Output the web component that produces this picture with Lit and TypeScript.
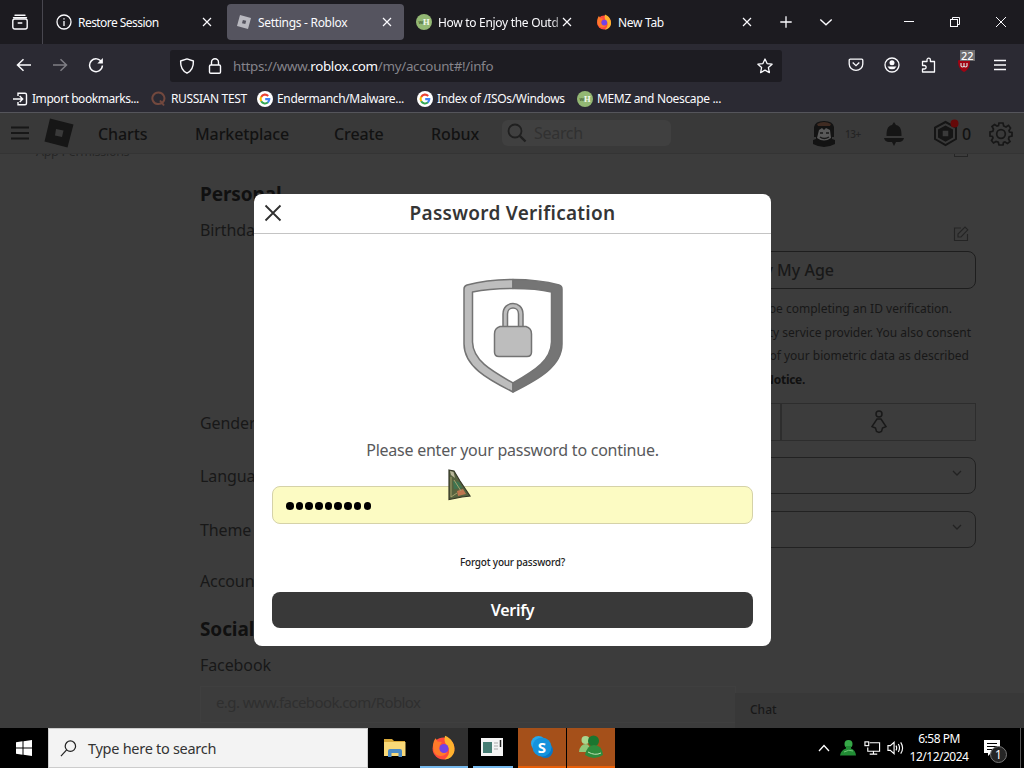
import { css, html, LitElement, svg } from "lit";
import { customElement, property } from "lit/decorators.js";
import { classMap } from "lit/directives/class-map.js";

const robloxLogo = svg`
  <path fill="#b9b9c0" d="M4 1 L15 4 L12 15 L1 12 Z" />
  <path fill="#55545f" d="M6.9 5.9 L10.2 6.8 L9.3 10.1 L6 9.2 Z" />
`;

const firefox = svg`
  <circle cx="8" cy="8.6" r="7" fill="#ff4a3d" />
  <path fill="#ffb22e" d="M9 0.5 C13 2 15.5 6 15 10 C14.6 13 12 15.6 8.5 15.6 C12 13.5 12.6 9 10 6.4 C8.5 5 8.4 2.5 9 0.5 Z" />
  <path fill="#ff7a2a" d="M1.3 7 C1.3 4.5 2.2 3 3 2 L4.2 4.2 L7 4.5 L5.5 7 C5 10 7 12 10.5 11 C9 14 3.5 14.5 1.8 10.5 Z" />
  <circle cx="8.3" cy="8.6" r="2.9" fill="#7542e5" />
`;

const google = svg`
  <circle cx="8" cy="8" r="8" fill="#fff" />
  <g fill="none" stroke-width="2.1">
    <path stroke="#ea4335" d="M4.2 5.9 A4.4 4.4 0 0 1 11.2 4.9" />
    <path stroke="#fbbc05" d="M4.3 10.4 A4.4 4.4 0 0 1 4.2 5.8" />
    <path stroke="#34a853" d="M11 11.3 A4.4 4.4 0 0 1 4.2 10.3" />
    <path stroke="#4285f4" d="M8.2 8.1 H12.3 A4.4 4.4 0 0 1 10.9 11.4" />
  </g>
`;

const wikihow = svg`
  <circle cx="8" cy="8" r="8" fill="#93b874" />
  <text x="2.5" y="10" font-size="6" font-weight="bold" fill="#4d6b3c" font-family="Liberation Sans">w</text>
  <text x="7" y="11" font-size="8.5" font-weight="bold" fill="#f2f7ec" font-family="Liberation Serif">H</text>
`;

const icons: Record<string, unknown> = {
  roblox: robloxLogo,
  firefox,
  google,
  wikihow,
  view: svg`<g fill="none" stroke="currentColor" stroke-width="1.4" stroke-linecap="round"><path d="M3 1.2 H13 M1.5 3.8 H14.5" /><rect x="0.8" y="5" width="14.4" height="10" rx="2" /><path d="M6.2 9 H9.8" /></g>`,
  info: svg`<g fill="none" stroke="currentColor" stroke-width="1.3"><circle cx="8" cy="8" r="7" /><path d="M8 7 V12" /><path d="M8 4.2 V5.6" /></g>`,
  close: svg`<path d="M4 4 L12 12 M12 4 L4 12" stroke="currentColor" stroke-width="1.2" />`,
  plus: svg`<path d="M8 2.3 V13.7 M2.3 8 H13.7" stroke="currentColor" stroke-width="1.3" />`,
  chevron: svg`<path d="M2.3 5.4 L8 10.8 L13.7 5.4" fill="none" stroke="currentColor" stroke-width="1.4" />`,
  minimize: svg`<path d="M3 7.5 H13" stroke="currentColor" />`,
  restore: svg`<g fill="none" stroke="currentColor"><rect x="3.5" y="5.5" width="7" height="7" /><path d="M5.5 5.5 V3.5 H12.5 V10.5 H10.5" /></g>`,
  windowClose: svg`<path d="M3 3 L13 13 M13 3 L3 13" stroke="currentColor" />`,
  back: svg`<path d="M15 8 H1.5 M7.5 2.2 L1.5 8 L7.5 13.8" fill="none" stroke="currentColor" stroke-width="1.5" />`,
  forward: svg`<path d="M1 8 H14.5 M8.5 2.2 L14.5 8 L8.5 13.8" fill="none" stroke="currentColor" stroke-width="1.5" />`,
  reload: svg`<path d="M13.7 5.3 A6.4 6.4 0 1 0 14.4 8.5" fill="none" stroke="currentColor" stroke-width="1.5" /><path d="M14.9 0.9 V6.5 H9.3 Z" fill="currentColor" />`,
  shield: svg`<path d="M8 0.9 L14.4 3 C14.6 9 12.5 13 8 15.2 C3.5 13 1.4 9 1.6 3 Z" fill="none" stroke="currentColor" stroke-width="1.4" stroke-linejoin="round" />`,
  lock: svg`<g fill="none" stroke="currentColor" stroke-width="1.4"><rect x="2.5" y="7" width="11" height="8.3" rx="1.3" /><path d="M4.5 7 V4.3 A3.5 3.5 0 0 1 11.5 4.3 V7" /></g>`,
  star: svg`<path d="M8 1 L10.1 5.6 L15.1 6.2 L11.4 9.6 L12.4 14.6 L8 12.1 L3.6 14.6 L4.6 9.6 L0.9 6.2 L5.9 5.6 Z" fill="none" stroke="currentColor" stroke-width="1.3" stroke-linejoin="round" />`,
  pocket: svg`<g fill="none" stroke="currentColor" stroke-width="1.3"><path d="M2.2 2.2 H13.8 A1 1 0 0 1 14.8 3.2 V7 A6.8 6.3 0 0 1 1.2 7 V3.2 A1 1 0 0 1 2.2 2.2 Z" /><path d="M4.7 5.5 L8 8.7 L11.3 5.5" /></g>`,
  account: svg`<circle cx="8" cy="8" r="7" fill="none" stroke="currentColor" stroke-width="1.3" /><circle cx="8" cy="5.8" r="2.5" fill="currentColor" /><path d="M3.5 9.5 H12.5 A5 5 0 0 1 3.5 9.5 Z" fill="currentColor" />`,
  puzzle: svg`<path d="M2.5 7 V4.5 H7 V2.8 A1.7 1.7 0 0 1 10.4 2.8 V4.5 H14.5 V15 H2.5 V12 H4.4 A1.7 1.7 0 0 0 4.4 8.5 H2.5 Z" fill="none" stroke="currentColor" stroke-width="1.3" stroke-linejoin="round" />`,
  menu: svg`<path d="M2 3.5 H14 M2 8 H14 M2 12.5 H14" stroke="currentColor" stroke-width="1.4" />`,
  importIcon: svg`<g fill="none" stroke="currentColor" stroke-width="1.4"><path d="M5 5 V2.2 H12 Q13.5 2.2 13.5 3.7 V12.3 Q13.5 13.8 12 13.8 H5 V11" /><path d="M0 8 H9.5 M6.7 5 L9.7 8 L6.7 11" /></g>`,
  quora: svg`<g fill="none" stroke="#72483e" stroke-width="2"><path d="M7.500 1.500 A6 5.800 0 1 0 12 11 A6 5.800 0 0 0 7.500 1.500" /><path d="M9 9.500 L13 14.500" /></g>`,
  ublock: svg`<path d="M8 1.5 L14 3.5 C14 9.5 12 13 8 15 C4 13 2 9.5 2 3.5 Z" fill="#a00312" /><path d="M5 6 V9 Q6.5 11 8 9 Q9.5 11 11 9 V6 M8 6 V9" fill="none" stroke="#ddd" stroke-width="1.2" />`,
};

@customElement("ui-icon")
export class UiIconElement extends LitElement {
  @property()
  name: string = "";

  render() {
    return html`<svg viewBox="0 0 16 16">${icons[this.name]}</svg>`;
  }

  static styles = css`
    :host {
      display: block;
      flex: none;
      width: 16px;
      height: 16px;
    }
    svg {
      display: block;
      width: 100%;
      height: 100%;
    }
  `;
}

@customElement("browser-chrome")
export class BrowserChromeElement extends LitElement {
  tabs = [
    { icon: "info", title: "Restore Session", active: false },
    { icon: "roblox", title: "Settings - Roblox", active: true },
    { icon: "wikihow", title: "How to Enjoy the Outd", active: false },
    { icon: "firefox", title: "New Tab", active: false },
  ];

  bookmarks = [
    { icon: "importIcon", title: "Import bookmarks...", width: 138 },
    { icon: "quora", title: "RUSSIAN TEST", width: 106 },
    { icon: "google", title: "Endermanch/Malware...", width: 160 },
    { icon: "google", title: "Index of /ISOs/Windows", width: 160 },
    { icon: "wikihow", title: "MEMZ and Noescape ...", width: 160 },
  ];

  render() {
    return html`
      <div class="tabs">
        <div class="view"><ui-icon name="view"></ui-icon></div>
        ${this.tabs.map(
          (t) => html`
            <div class=${classMap({ tab: true, active: t.active })}>
              <ui-icon name=${t.icon}></ui-icon>
              <span class="title">${t.title}</span>
              <ui-icon name="close"></ui-icon>
            </div>
          `
        )}
        <ui-icon class="plus" name="plus"></ui-icon>
        <ui-icon class="all" name="chevron"></ui-icon>
        <div class="window">
          <ui-icon name="minimize"></ui-icon>
          <ui-icon name="restore"></ui-icon>
          <ui-icon name="windowClose"></ui-icon>
        </div>
      </div>
      <div class="nav">
        <div class="moves">
          <ui-icon name="back"></ui-icon>
          <ui-icon class="dim" name="forward"></ui-icon>
          <ui-icon name="reload"></ui-icon>
        </div>
        <div class="url">
          <ui-icon name="shield"></ui-icon>
          <ui-icon name="lock"></ui-icon>
          <span class="address">https://www.<b>roblox.com</b>/my/account#!/info</span>
          <ui-icon name="star"></ui-icon>
        </div>
        <div class="tools">
          <ui-icon name="pocket"></ui-icon>
          <ui-icon name="account"></ui-icon>
          <ui-icon name="puzzle"></ui-icon>
          <div class="blocker">
            <ui-icon name="ublock"></ui-icon>
            <span class="count">22</span>
          </div>
          <ui-icon name="menu"></ui-icon>
        </div>
      </div>
      <div class="bookmarks">
        ${this.bookmarks.map(
          (b) => html`
            <div class="bookmark" style="width: ${b.width}px">
              <ui-icon name=${b.icon}></ui-icon>${b.title}
            </div>
          `
        )}
      </div>
    `;
  }

  static styles = css`
    :host {
      display: block;
      height: 113px;
      box-sizing: border-box;
      background: #2b2a33;
      border-bottom: 1px solid #55555b;
      color: #fbfbfe;
      font: 12px "Noto Sans", sans-serif;
      white-space: nowrap;
    }
    .tabs {
      display: flex;
      align-items: center;
      height: 44px;
      background: #1c1b20;
    }
    .view {
      display: flex;
      align-items: center;
      justify-content: center;
      width: 43px;
      height: 44px;
      padding-right: 2px;
      box-sizing: border-box;
      border-right: 1px solid #48474f;
      margin-right: 4px;
    }
    .tab {
      display: flex;
      align-items: center;
      box-sizing: border-box;
      width: 177px;
      height: 36px;
      margin-right: 3px;
      padding: 0 9px 0 9px;
      border-radius: 4px;
    }
    .active {
      background: #55545f;
    }
    .title {
      flex: 1;
      min-width: 0;
      margin-left: 6px;
      letter-spacing: -0.3px;
    }
    .tab:nth-child(2) .title {
      letter-spacing: -0.55px;
    }
    .tab:nth-child(4) .title {
      margin-right: -4px;
      mask-image: linear-gradient(to right, #000 90%, #0004);
    }
    .plus {
      margin-left: 11px;
    }
    .all {
      margin-left: 24px;
    }
    .window {
      display: flex;
      gap: 30px;
      margin-left: auto;
      padding-right: 15px;
    }
    .nav {
      display: flex;
      align-items: center;
      height: 42px;
    }
    .moves {
      display: flex;
      gap: 20px;
      width: 154px;
      padding-left: 16px;
    }
    .dim {
      opacity: 0.4;
    }
    .url {
      display: flex;
      align-items: center;
      box-sizing: border-box;
      width: 612px;
      height: 32px;
      margin-top: 1px;
      padding: 0 9px;
      gap: 12px;
      border-radius: 3px;
      background: #1d1c22;
    }
    .address {
      flex: 1;
      font-size: 13.4px;
      letter-spacing: -0.3px;
      margin-left: -2px;
      color: #85848b;
    }
    b {
      font-weight: 400;
      color: #fbfbfe;
    }
    .tools {
      display: flex;
      gap: 20px;
      margin-left: auto;
      padding-right: 16px;
    }
    .blocker {
      position: relative;
    }
    .count {
      position: absolute;
      left: 4px;
      top: -7px;
      padding: 0 1px;
      background: #6d6d70;
      font: 500 11px/11px "Noto Sans", sans-serif;
    }
    .bookmarks {
      display: flex;
      align-items: center;
      height: 25px;
      padding-left: 13px;
    }
    .bookmark {
      display: flex;
      align-items: center;
      gap: 4px;
      font-size: 12px;
      letter-spacing: -0.35px;
    }
    .bookmark:first-child {
      gap: 3px;
      letter-spacing: -0.45px;
    }
  `;
}

@customElement("settings-page")
export class SettingsPageElement extends LitElement {
  // "end" is the gap between the text and the right side of the column
  notice = [
    { text: "be completing an ID verification.", end: 24 },
    { text: "ty service provider. You also consent", end: 5 },
    { text: "of your biometric data as described", end: 7 },
  ];

  render() {
    return html`
      <header class="header">
        <svg class="burger" viewBox="0 0 20 14"><path d="M1 1.5 H19 M1 7 H19 M1 12.5 H19" stroke="#171717" stroke-width="1.8" /></svg>
        <svg class="logo" viewBox="0 0 30 30"><path fill="#161616" fill-rule="evenodd" d="M6 0.5 L29.5 6.5 L23.5 29.5 L0.5 23.5 Z M12 11 L11 17.5 L18 19 L19.5 12.5 Z" /></svg>
        <a class="charts">Charts</a>
        <a class="market">Marketplace</a>
        <a class="create">Create</a>
        <a class="robux">Robux</a>
        <div class="search">
          <svg class="lens" viewBox="0 0 20 20"><circle cx="8" cy="8" r="6.5" fill="none" stroke="#202020" stroke-width="1.8" /><path d="M12.8 12.8 L18.5 18.5" stroke="#202020" stroke-width="2.4" /></svg>
          Search
        </div>
        <svg class="avatar" viewBox="0 0 24 26">
          <path fill="#131313" d="M2 6 Q3 0 12 0 Q21 0 22 6 V16 H20 V18 L23 19 V23 Q12 29 1 23 V19 L4 18 V16 H2 Z" />
          <path fill="#3f2b22" d="M5 3 Q12 -1 19 3 L18 5 H6 Z" />
          <path fill="#595959" d="M7 9 L10 7 L12 9 L14 7 L18 9 L19 17 Q12 22 5 17 Z" />
          <path d="M8 12 H11 M14 12 H17 M8 16 Q12 19 17 16" fill="none" stroke="#191919" stroke-width="1.4" />
        </svg>
        <span class="age">13+</span>
        <svg class="bell" viewBox="0 0 22 24"><path fill="#151515" d="M11 0 L13 3 C18 4 18.5 9 18.5 14 H3.5 C3.5 9 4 4 9 3 Z M1 16 H21 Q20 20 16 20 H13 L11 24 L9 20 H6 Q2 20 1 16 Z" /></svg>
        <svg class="coin" viewBox="0 0 28 28">
          <path d="M12.5 3 L23 8.5 V20 L12.5 26 L2 20 V8.5 Z" fill="none" stroke="#151515" stroke-width="2" />
          <path fill="#151515" fill-rule="evenodd" d="M12.5 6.5 L20 10.5 V18.5 L12.5 22.7 L5 18.5 V10.5 Z M9.7 11.7 V17.3 H15.3 V11.7 Z" />
          <circle cx="21.5" cy="4.5" r="4" fill="#650909" />
        </svg>
        <span class="balance">0</span>
        <svg class="gear" viewBox="0 0 24 24">
          <g fill="none" stroke="#171717" stroke-width="1.7">
            <path d="M10 1 H14 L14.7 4 L17 5 L19.5 3.3 L21.5 6 L20 8.5 L20.5 10 L23 10.5 V14 L20.2 14.7 L19.5 17 L21 19.5 L18.5 21.5 L16 20 L14.5 20.5 L14 23 H10 L9.3 20.2 L7 19.5 L4.5 21 L2.5 18.5 L4 16 L3.500 14.5 L1 14 V10 L3.8 9.3 L4.5 7 L3 4.5 L5.5 2.5 L8 4 L9.5 3.5 Z" />
            <circle cx="12" cy="12" r="4.3" />
          </g>
        </svg>
      </header>
      <div class="menu"><span class="perm">App Permissions</span></div>
      <div class="stub"></div>
      <main class="form">
        <h2 class="heading personal">Personal</h2>
        <div class="row birthday">
          <span class="label">Birthday</span>
          <svg class="edit" viewBox="0 0 16 16"><path d="M8 2 H1.5 V14.5 H14.5 V8 M5 11 V8 L12 1 L14.8 3.8 L8 11 Z" fill="none" stroke="#242424" stroke-width="1.1" /></svg>
        </div>
        <div class="button">Verify My Age</div>
        <div class="notice">
          ${this.notice.map(
            (n) => html`<div class="line" style="padding-right: ${n.end}px">${n.text}</div>`
          )}
          <div class="line policy">Notice.</div>
        </div>
        <div class="row gender">
          <span class="label">Gender</span>
          <div class="choice"></div>
          <div class="choice">
            <svg class="person" viewBox="0 0 16 24"><g fill="none" stroke="#191919" stroke-width="1.5"><circle cx="8" cy="4" r="3" /><path d="M6 9 H10 L15 16.5 L11.5 18 L10.5 21.5 L8 22.5 L5.5 21.5 L4.5 18 L1 16.500 Z" /></g></svg>
          </div>
        </div>
        ${["Language", "Theme"].map(
          (name) => html`
            <div class="row picker">
              <span class="label">${name}</span>
              <div class="select">
                <svg class="arrow" viewBox="0 0 10 6"><path d="M1 1 L5 5 L9 1" fill="none" stroke="#222" stroke-width="1.3" /></svg>
              </div>
            </div>
          `
        )}
        <div class="row account"><span class="label">Account</span></div>
        <h2 class="heading social">Social</h2>
        <div class="row facebook"><span class="label">Facebook</span></div>
        <div class="input">e.g. www.facebook.com/Roblox</div>
      </main>
      <div class="chat">Chat</div>
    `;
  }

  static styles = css`
    :host {
      display: block;
      position: relative;
      height: 615px;
      overflow: hidden;
      background: #3c3c3c;
      color: #181818;
      font: 16px "Noto Sans", sans-serif;
      white-space: nowrap;
    }
    .header {
      display: flex;
      align-items: center;
      box-sizing: border-box;
      height: 41px;
      padding: 1px 11px 0 10px;
      background: #393939;
      border-bottom: 1px solid #343434;
      font-weight: 500;
      letter-spacing: -0.1px;
      color: #121212;
    }
    .burger {
      width: 20px;
      height: 14px;
      margin-right: 14px;
      margin-top: -2px;
    }
    .logo {
      width: 30px;
      height: 30px;
      margin-right: 24px;
      margin-top: -1px;
    }
    .charts {
      width: 97px;
      padding-top: 1px;
    }
    .market {
      width: 139px;
      padding-top: 1px;
    }
    .create {
      width: 97px;
      padding-top: 1px;
    }
    .robux {
      width: 71px;
      padding-top: 1px;
    }
    .search {
      display: flex;
      align-items: center;
      width: 169px;
      height: 26px;
      gap: 7px;
      margin-top: -1px;
      padding-left: 5px;
      box-sizing: border-box;
      border-radius: 6px;
      background: #404040;
      color: #313131;
      font-weight: 400;
      letter-spacing: -0.3px;
    }
    .lens {
      width: 20px;
      height: 20px;
    }
    .avatar {
      width: 24px;
      height: 26px;
      margin-left: 141px;
    }
    .age {
      width: 38px;
      margin-left: 9px;
      font-size: 10px;
      letter-spacing: -0.5px;
      color: #242424;
    }
    .bell {
      width: 22px;
      height: 24px;
    }
    .coin {
      width: 28px;
      height: 28px;
      margin-left: 28px;
      margin-top: -2px;
    }
    .balance {
      width: 27px;
      margin-left: 1px;
    }
    .gear {
      width: 24px;
      height: 24px;
    }
    .menu {
      height: 5px;
      width: 193px;
      overflow: hidden;
      padding-left: 36px;
      box-sizing: border-box;
      display: flex;
      align-items: flex-end;
    }
    .perm {
      font-size: 12.5px;
      line-height: 15px;
      letter-spacing: -0.3px;
      color: #262626;
    }
    .stub {
      width: 14px;
      height: 3px;
      margin: -5px 0 2px 954px;
      box-sizing: border-box;
      border: 1px solid #262626;
      border-top: 0;
    }
    .form {
      width: 776px;
      margin-left: 200px;
    }
    .heading {
      margin: 0;
      font-size: 19px;
      line-height: 30px;
      font-weight: 700;
      letter-spacing: -0.1px;
      color: #101010;
    }
    .personal {
      padding-top: 20px;
    }
    .row {
      display: flex;
      align-items: center;
    }
    .label {
      flex: 1;
      line-height: 22px;
      letter-spacing: -0.1px;
    }
    .birthday {
      height: 42px;
    }
    .edit {
      width: 16px;
      height: 16px;
      margin: 7px 7px 0 0;
    }
    .button {
      box-sizing: border-box;
      width: 396px;
      height: 38px;
      margin-left: auto;
      padding-right: 141px;
      border: 1px solid #1e1e1e;
      border-radius: 8px;
      line-height: 36px;
      text-align: right;
      font-weight: 500;
    }
    .notice {
      width: 396px;
      height: 114px;
      margin-left: auto;
      padding-top: 8px;
      box-sizing: border-box;
      text-align: right;
      font-size: 12px;
      line-height: 23.7px;
    }
    .policy {
      padding-right: 171px;
      font-weight: 700;
      letter-spacing: -0.3px;
      color: #101010;
    }
    .gender {
      height: 38px;
      margin-bottom: -1px;
    }
    .gender .label {
      padding-top: 1px;
    }
    .choice {
      display: flex;
      align-items: center;
      justify-content: center;
      box-sizing: border-box;
      width: 195px;
      height: 38px;
      border: 1px solid #2d2d2d;
    }
    .person {
      width: 16px;
      height: 24px;
    }
    .picker {
      height: 38px;
      margin-top: 16px;
    }
    .picker .label {
      padding-top: 2px;
    }
    .select {
      display: flex;
      align-items: center;
      justify-content: flex-end;
      box-sizing: border-box;
      width: 396px;
      height: 37px;
      padding: 0 13px 5px 0;
      border: 1px solid #222;
      border-radius: 8px;
    }
    .arrow {
      width: 10px;
      height: 6px;
    }
    .account {
      height: 66px;
    }
    .social {
      line-height: 30px;
    }
    .facebook {
      height: 42px;
    }
    .input {
      box-sizing: border-box;
      width: 536px;
      height: 37px;
      padding-left: 15px;
      border: 1px solid #3f3f3f;
      line-height: 30px;
      font-size: 15px;
      letter-spacing: -0.6px;
      color: #2f2f2f;
    }
    .chat {
      position: absolute;
      right: 0;
      bottom: 0;
      box-sizing: border-box;
      width: 289px;
      height: 35px;
      padding-left: 15px;
      background: #383838;
      font-size: 12px;
      font-weight: 500;
      line-height: 33px;
    }
  `;
}

@customElement("password-dialog")
export class PasswordDialogElement extends LitElement {
  render() {
    return html`
      <div class="head">
        <svg class="close" viewBox="0 0 18 18"><path d="M1.500 1.500 L16.500 16.500 M16.500 1.500 L1.500 16.500" stroke="#303030" stroke-width="1.8" /></svg>
        <span class="title">Password Verification</span>
      </div>
      <svg class="shield" viewBox="0 0 102 116">
        <g stroke="#737373" stroke-width="1.5" stroke-linejoin="round">
          <path fill="#bdbdbd" d="M51 1.5 C35 1.5 18 3.5 5 7 Q2 8 2 11 V66 C2 88 25 101 51 114 V105 C28 92 11 82 10.5 64 V14 C23 11.5 37 10.5 51 10.5 Z" />
          <path fill="#757575" d="M51 1.5 C67 1.5 84 3.5 97 7 Q100 8 100 11 V66 C100 88 77 101 51 114 V105 C74 92 89 82 89.5 64 V14 C79 11.5 65 10.5 51 10.5 Z" />
          <path fill="#bdbdbd" d="M41 50 V36 C41 22 61 22 61 36 V50 H56.5 V36 C56.5 28 45.5 28 45.5 36 V50 Z" />
          <path fill="#bdbdbd" d="M38 48.5 H64 Q69.5 50 69.5 56 V74 Q69.5 78.5 65 78.5 H37 Q32.5 78.5 32.5 74 V56 Q32.5 50 38 48.5 Z" />
        </g>
      </svg>
      <p class="message">Please enter your password to continue.</p>
      <div class="field">
        ${Array.from({ length: 9 }, () => html`<i class="dot"></i>`)}
      </div>
      <a class="forgot">Forgot your password?</a>
      <div class="verify">Verify</div>
    `;
  }

  static styles = css`
    :host {
      display: flex;
      flex-direction: column;
      align-items: center;
      box-sizing: border-box;
      width: 517px;
      height: 452px;
      border-radius: 8px;
      background: #fff;
      color: #353535;
      font: 16px "Noto Sans", sans-serif;
      white-space: nowrap;
    }
    .head {
      display: flex;
      align-items: center;
      align-self: stretch;
      box-sizing: border-box;
      height: 40px;
      padding: 0 28px 2px 10px;
      border-bottom: 1px solid #c4c4c4;
    }
    .close {
      width: 18px;
      height: 18px;
    }
    .title {
      flex: 1;
      text-align: center;
      font-size: 19px;
      font-weight: 600;
      letter-spacing: 0.27px;
    }
    .shield {
      width: 102px;
      height: 116px;
      margin-top: 44px;
      flex: none;
    }
    .message {
      margin: 44px 0 0;
      line-height: 24px;
      letter-spacing: -0.25px;
      color: #58595b;
    }
    .field {
      display: flex;
      align-items: center;
      box-sizing: border-box;
      width: 481px;
      height: 38px;
      margin-top: 24px;
      padding: 2px 0 0 13px;
      gap: 2.2px;
      border: 1px solid #d5d2a8;
      border-radius: 8px;
      background: #fcfbc3;
    }
    .dot {
      width: 7.5px;
      height: 7.5px;
      border-radius: 50%;
      background: #000;
    }
    .forgot {
      margin-top: 30px;
      font-size: 10px;
      line-height: 16px;
      font-weight: 500;
      letter-spacing: -0.2px;
      color: #222;
    }
    .verify {
      width: 481px;
      height: 36px;
      margin-top: 22px;
      border-radius: 8px;
      background: #393939;
      color: #fff;
      font-weight: 600;
      letter-spacing: -0.3px;
      line-height: 36px;
      text-align: center;
    }
  `;
}

@customElement("task-bar")
export class TaskBarElement extends LitElement {
  render() {
    return html`
      <div class="start">
        <svg class="flag" viewBox="0 0 16 16"><path fill="#fff" d="M0 2.2 L6.5 1.3 V7.5 H0 Z M7.5 1.2 L16 0 V7.5 H7.5 Z M0 8.5 H6.5 V14.7 L0 13.8 Z M7.5 8.5 H16 V16 L7.5 14.8 Z" /></svg>
      </div>
      <div class="search">
        <svg class="lens" viewBox="0 0 18 18"><g fill="none" stroke="#222" stroke-width="1.3"><circle cx="11" cy="6.5" r="5.5" /><path d="M7 10.5 L1 17" /></g></svg>
        Type here to search
      </div>
      <div class="app explorer">
        <svg class="app-icon" viewBox="0 0 24 24">
          <path fill="#d9a93a" d="M1 3 H9 L11 5 H22 V20 H1 Z" />
          <path fill="#f9d978" d="M1 6 H22.5 V20 H1 Z" />
          <path fill="#4b8ac4" d="M5 15 Q5 13 7 13 H17 Q19 13 19 15 V21 H15.500 V17 H8.500 V21 H5 Z" />
        </svg>
      </div>
      <div class="app current"><ui-icon class="fox" name="firefox"></ui-icon></div>
      <div class="app running">
        <svg class="app-icon" viewBox="0 0 24 24">
          <rect x="1" y="3" width="22" height="18" fill="#f4f4f4" />
          <rect x="3" y="7" width="9" height="11" fill="#467d74" />
          <path d="M14 8 H18 M14 11 H18 M14 14 H18" stroke="#aaa" />
          <path d="M20.5 5 V12" stroke="#222" stroke-width="1.5" />
        </svg>
      </div>
      <div class="app alert skype">
        <svg class="app-icon" viewBox="0 0 24 24">
          <circle cx="8.500" cy="8.500" r="7.5" fill="#28a8ea" /><circle cx="15.500" cy="15.500" r="7.500" fill="#0b75c4" /><circle cx="12" cy="12" r="9.5" fill="#1593dc" />
          <text x="12" y="17.5" text-anchor="middle" font-family="Noto Sans" font-size="15" font-weight="bold" fill="#fff">S</text>
        </svg>
      </div>
      <div class="app alert">
        <svg class="app-icon" viewBox="0 0 24 24">
          <circle cx="6.5" cy="5" r="4" fill="#a9d68e" /><path fill="#91c779" d="M0 17 Q1 9 7 9 Q11 9 11 17 Z" />
          <circle cx="14.500" cy="6" r="5.500" fill="#1b762f" /><path fill="#2e8b3c" d="M6 20 Q8 10 15 10 Q23 10 24 20 Q15 26 6 20 Z" />
          <path d="M9 17 Q16 21 22 18" fill="none" stroke="#c0dfb3" />
        </svg>
      </div>
      <div class="tray">
        <svg class="up" viewBox="0 0 12 8"><path d="M1 7 L6 1.5 L11 7" fill="none" stroke="#fff" stroke-width="1.3" /></svg>
        <svg class="user" viewBox="0 0 16 16"><circle cx="8.5" cy="4" r="4" fill="#36a847" /><path fill="#218c34" d="M0 15.5 Q1 10 6 8.5 V6 H11 V8.500 Q15.5 10 16 15.5 Z" /><path d="M4 12 Q9 9 13 11" fill="none" stroke="#70c878" /></svg>
        <svg class="net" viewBox="0 0 18 16"><g fill="none" stroke="#fff" stroke-width="1.2"><path d="M6 2.5 H16.5 V11.5 H4 V7.5 M10 11.5 V14.5 M6 14.5 H14" /><rect x="1" y="1.5" width="4" height="4" /></g></svg>
        <svg class="sound" viewBox="0 0 18 16"><g fill="none" stroke="#fff" stroke-width="1.2"><path d="M1 5.5 H3.5 L7.5 2 V14 L3.5 10.5 H1 Z M9.5 5.5 Q11 8 9.5 10.5 M12 3.8 Q14.5 8 12 12.2 M14.5 2 Q18.5 8 14.5 14" /></g></svg>
      </div>
      <div class="clock"><span>6:58 PM</span><span>12/12/2024</span></div>
      <div class="notes">
        <svg class="note" viewBox="0 0 16 16"><path fill="#fff" d="M0 0 H16 V13 H7 L4 16 V13 H0 Z" /><path d="M3 3.5 H13 M3 6.5 H13 M3 9.5 H10" stroke="#000" stroke-width="1.1" /></svg>
        <span class="count">1</span>
      </div>
    `;
  }

  static styles = css`
    :host {
      display: flex;
      height: 40px;
      background: #000;
      color: #fff;
      font: 12px "Noto Sans", sans-serif;
      white-space: nowrap;
    }
    .start {
      display: flex;
      align-items: center;
      justify-content: center;
      width: 48px;
    }
    .flag {
      width: 16px;
      height: 16px;
    }
    .search {
      display: flex;
      align-items: center;
      gap: 11px;
      box-sizing: border-box;
      width: 320px;
      padding-left: 11px;
      border: 1px solid #ccc;
      background: #f3f3f3;
      color: #333;
      font-size: 14.5px;
      letter-spacing: -0.28px;
    }
    .lens {
      width: 17px;
      height: 17px;
    }
    .app {
      display: flex;
      align-items: center;
      justify-content: center;
      box-sizing: border-box;
      width: 48px;
    }
    .explorer {
      width: 52px;
      padding-left: 2px;
    }
    .current {
      background: #303030;
      border-bottom: 2px solid #76b9ed;
    }
    .running {
      width: 40px;
      margin: 0 5px;
      padding-right: 2px;
      border-bottom: 2px solid #76b9ed;
    }
    .alert {
      background: #a5501a;
      border-bottom: 2px solid #e85f08;
    }
    .skype {
      margin-right: 1px;
    }
    .app-icon {
      width: 24px;
      height: 24px;
    }
    .fox {
      width: 25px;
      height: 25px;
      margin-right: 2px;
    }
    .tray {
      display: flex;
      align-items: center;
      gap: 8px;
      margin-left: auto;
    }
    .up {
      width: 12px;
      height: 8px;
      margin-right: 2px;
    }
    .user {
      width: 16px;
      height: 16px;
    }
    .net,
    .sound {
      width: 17px;
      height: 16px;
    }
    .sound {
      margin-left: -2px;
    }
    .clock {
      display: flex;
      flex-direction: column;
      align-items: center;
      justify-content: center;
      width: 70px;
      padding: 0 1px 1px 0;
      line-height: 17.5px;
      letter-spacing: -0.5px;
    }
    .notes {
      position: relative;
      display: flex;
      align-items: center;
      box-sizing: border-box;
      width: 46px;
      margin-right: 3px;
      padding-left: 9px;
      border-right: 1px solid #555;
    }
    .note {
      width: 16px;
      height: 16px;
    }
    .count {
      position: absolute;
      left: 15px;
      top: 18px;
      width: 15px;
      height: 15px;
      border: 1px solid #777;
      border-radius: 50%;
      background: #252525;
      line-height: 15px;
      text-align: center;
    }
  `;
}

@customElement("app-root")
export class AppRootElement extends LitElement {
  render() {
    return html`
      <browser-chrome></browser-chrome>
      <settings-page></settings-page>
      <task-bar></task-bar>
      <password-dialog class="dialog"></password-dialog>
      <svg class="cursor" viewBox="0 0 24 32">
        <path fill="#56633f" stroke="#343626" stroke-width="1.2" d="M1 1 L6 2 L12 12 L22 27 L14 28 L1 30.5 Z" />
        <path fill="#b9b69b" d="M2 2 L5.5 3 L7 9 L3 6 Z" />
        <path fill="#3f7450" d="M5 12 L11 13 L14 19 L6 20 Z" />
        <path fill="#bd7650" d="M9 22 L15 20 L18 25 L10 27 Z" />
        <path d="M3 8 V28 L9 24 M6 11 L13 22" fill="none" stroke="#a4a06c" />
      </svg>
    `;
  }

  static styles = css`
    :host {
      display: block;
      position: relative;
      width: 1024px;
      height: 768px;
      overflow: hidden;
    }
    .dialog {
      position: absolute;
      left: 254px;
      top: 194px;
    }
    .cursor {
      position: absolute;
      left: 448px;
      top: 469px;
      width: 24px;
      height: 32px;
    }
  `;
}
